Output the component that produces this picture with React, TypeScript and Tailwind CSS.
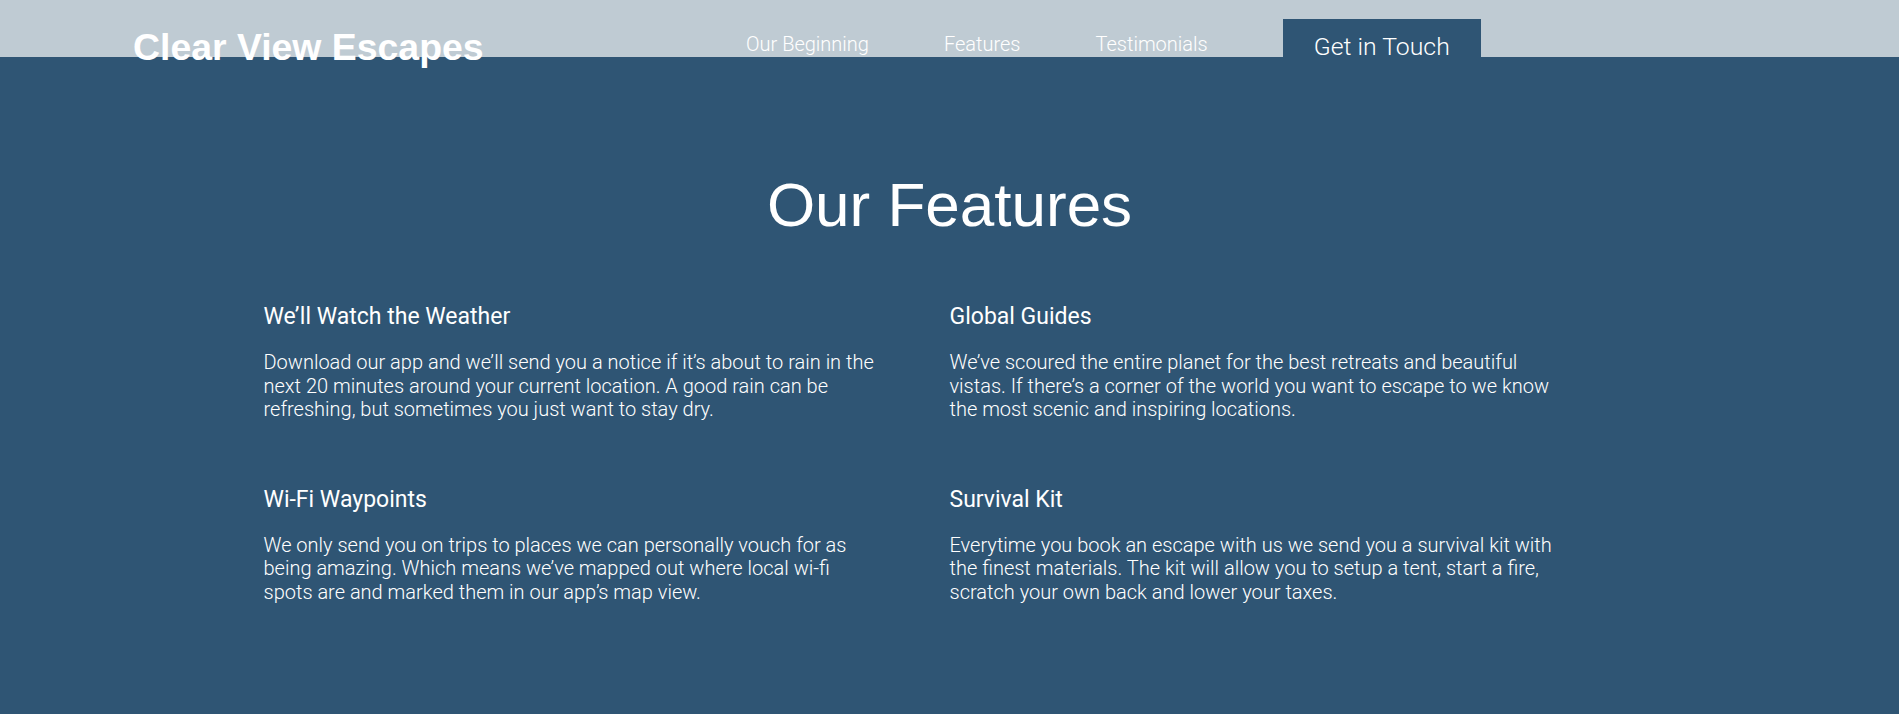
import React from "react";

const features = [
  {
    title: "We’ll Watch the Weather",
    body: "Download our app and we’ll send you a notice if it’s about to rain in the next 20 minutes around your current location. A good rain can be refreshing, but sometimes you just want to stay dry.",
  },
  {
    title: "Global Guides",
    body: "We’ve scoured the entire planet for the best retreats and beautiful vistas. If there’s a corner of the world you want to escape to we know the most scenic and inspiring locations.",
  },
  {
    title: "Wi-Fi Waypoints",
    body: "We only send you on trips to places we can personally vouch for as being amazing. Which means we’ve mapped out where local wi-fi spots are and marked them in our app’s map view.",
  },
  {
    title: "Survival Kit",
    body: "Everytime you book an escape with us we send you a survival kit with the finest materials. The kit will allow you to setup a tent, start a fire, scratch your own back and lower your taxes.",
  },
];

export default function App() {
  return (
    <div className="min-h-[714px] w-full bg-[#2f5574] text-white">
      <header className="flex h-[57px] bg-[#bfcbd3] pl-[133px]">
        <div className="w-[613px] shrink-0">
          <h1 className="mt-[19px] whitespace-nowrap font-['Liberation_Sans',Arial,sans-serif] text-[37.4px] font-bold leading-normal text-white">
            Clear View Escapes
          </h1>
        </div>
        <nav className="flex items-start gap-[75px] font-['Roboto',sans-serif] font-light text-white">
          <a className="mt-[32px] text-[20px] leading-[24px]">Our Beginning</a>
          <a className="mt-[32px] text-[20px] leading-[24px]">Features</a>
          <a className="mt-[32px] text-[20px] leading-[24px]">Testimonials</a>
          <a className="mt-[19px] flex h-[38px] items-start bg-[#2f5574] px-[31px] pt-[14px] text-[24.8px] leading-[28px]">
            Get in Touch
          </a>
        </nav>
      </header>

      <main className="pb-[80px] pt-[101px]">
        <h2 className="text-center font-['Liberation_Sans',Arial,sans-serif] text-[62px] font-normal leading-normal">
          Our Features
        </h2>
        <div className="mx-auto mt-[52px] grid w-[1372px] grid-cols-2 gap-y-[64px]">
          {features.map((f) => (
            <div key={f.title} className="w-[618px] font-['Roboto',sans-serif]">
              <h3 className="text-[23px] font-normal leading-[28px]">{f.title}</h3>
              <p className="mt-[20px] text-[20px] font-light leading-[23.5px]">{f.body}</p>
            </div>
          ))}
        </div>
      </main>
    </div>
  );
}
